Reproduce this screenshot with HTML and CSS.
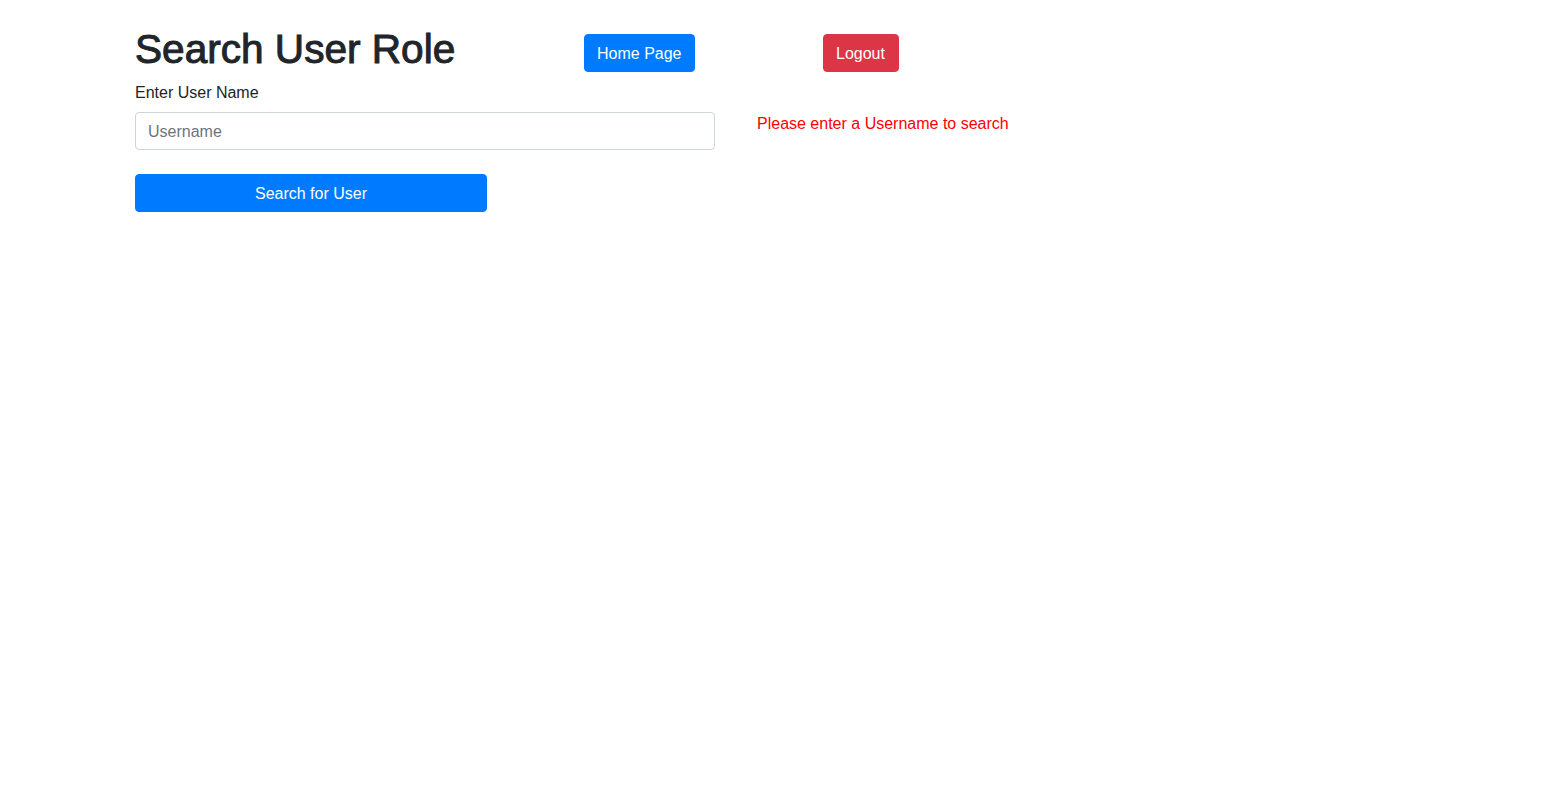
FILE: index.html
```html
<!DOCTYPE html>
<html lang="en">
<head>
<meta charset="utf-8">
<title>Search User Role</title>
<link rel="stylesheet" href="styles.css">
</head>
<body>
<div class="page">
  <div class="header">
    <h1 class="title">Search User Role</h1>
    <div class="nav-cell"><button class="btn btn-primary">Home Page</button></div>
    <div class="nav-cell"><button class="btn btn-danger">Logout</button></div>
  </div>
  <label class="label" for="username">Enter User Name</label>
  <div class="search-row">
    <input id="username" class="input" type="text" placeholder="Username">
    <p class="error">Please enter a Username to search</p>
  </div>
  <button class="btn btn-primary btn-search">Search for User</button>
</div>
</body>
</html>
```

FILE: styles.css
```css
* { box-sizing: border-box; }
html, body {
  margin: 0;
  background: #fff;
  font-family: "Liberation Sans", Arial, Helvetica, sans-serif;
  font-size: 16px;
  line-height: 1.5;
  color: #212529;
}
.page {
  padding: 27px 0 0 135px;
}
.header {
  display: grid;
  grid-template-columns: 449px 239px auto;
  align-items: start;
}
.title {
  margin: -2px 0 7px 0;
  font-size: 40.6px;
  line-height: 48px;
  font-weight: 400;
  -webkit-text-stroke: 1px #212529;
  color: #212529;
}
.nav-cell {
  padding-top: 7px;
}
.btn {
  display: inline-block;
  font-family: inherit;
  font-size: 16px;
  line-height: 24px;
  padding: 7px 12px 5px;
  border: 1px solid transparent;
  border-radius: 4px;
  color: #fff;
  cursor: pointer;
}
.btn-primary { background: #007bff; border-color: #007bff; }
.btn-danger { background: #dc3545; border-color: #dc3545; padding-right: 13px; }
.label {
  display: block;
  padding-top: 1px;
  margin-bottom: 7px;
  line-height: 24px;
}
.search-row {
  display: flex;
  align-items: flex-start;
  gap: 42px;
}
.input {
  width: 580px;
  height: 38px;
  padding: 7px 12px 5px;
  font-family: inherit;
  font-size: 16px;
  line-height: 24px;
  color: #495057;
  border: 1px solid #ced4da;
  border-radius: 4px;
  background: #fff;
}
.input::placeholder { color: #6c757d; }
.error {
  margin: 0;
  color: #ff0000;
  line-height: 24px;
}
.btn-search {
  margin-top: 24px;
  width: 352px;
  text-align: center;
}
```
